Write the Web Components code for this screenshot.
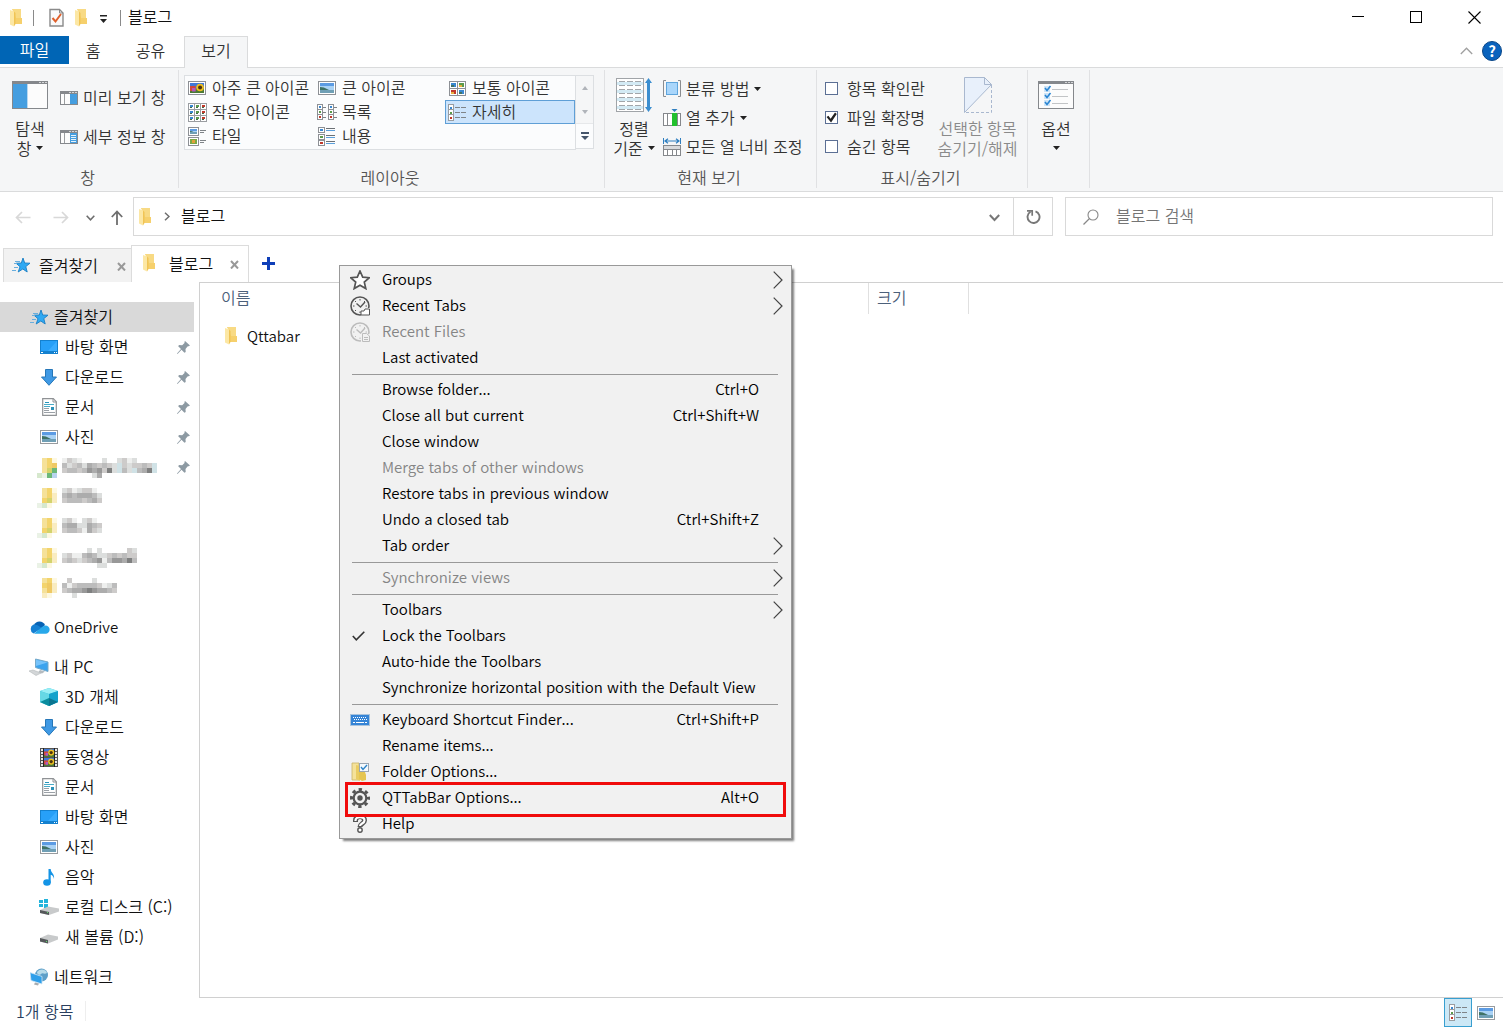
<!DOCTYPE html>
<html lang="ko">
<head>
<meta charset="utf-8">
<title>블로그</title>
<style>
  html, body { margin: 0; height: 100%; background: #fff; }
  body { font: 350 16px/20px "Noto Sans CJK KR", "Noto Sans", sans-serif; color: #111; }
</style>
</head>
<body>
<explorer-window></explorer-window>

<script>
/* ---------- icon library ---------- */
const svg = (w, h, body, extra = '') =>
  `<svg width="${w}" height="${h}" viewBox="0 0 ${w} ${h}" aria-hidden="true" fill="none" ${extra}>${body}</svg>`;
const rect = (x, y, w, h, fill, more = '') => `<rect x="${x}" y="${y}" width="${w}" height="${h}" fill="${fill}" ${more}/>`;
const frame = (x, y, w, h, fill = '#fff', stroke = '#8d9095') =>
  rect(x + .5, y + .5, w - 1, h - 1, fill, `stroke="${stroke}"`);
const photo = (x, y, w, h) =>
  rect(x, y, w, h, '#a9d2f5') + rect(x, y, w, Math.round(h * .3), '#5c9be3') +
  `<path d="M${x} ${y + h * .4}q${w * .3} 0 ${w * .5} ${h * .2}t${w * .5} ${h * .1}V${y + h}H${x}z" fill="#3f7266"/>` +
  rect(x, y + h - Math.ceil(h * .25), w, Math.ceil(h * .25), '#6f9fb5');
const flower = (x, y, w, h) =>
  rect(x, y, w, h, '#3f78d8') + rect(x, y + h * .55, w, h * .45, '#4b7a35') +
  rect(x, y + h * .3, w * .4, h * .5, '#d0483c') + rect(x + w * .15, y + h * .5, w * .25, h * .35, '#b05ac0') +
  `<circle cx="${x + w * .72}" cy="${y + h * .45}" r="${h * .38}" fill="#f0c020"/><circle cx="${x + w * .72}" cy="${y + h * .45}" r="${h * .2}" fill="#4b3310"/>`;
const mosaic = (rows, pal, size = 5, dx = 0) => {
  let out = '';
  rows.forEach((row, r) => [...row].forEach((c, i) => {
    if (pal[c]) out += rect(i * size - dx, r * size + 1, size, size, pal[c]);
  }));
  return svg(rows[0].length * size, rows.length * size, out, 'style="overflow:visible" shape-rendering="crispEdges"');
};
const gray = { a: '#eeefee', b: '#dcdedd', c: '#cdcbca', d: '#bcbcbc', e: '#acacac', f: '#989898', g: '#7f8080', t: '#d0e2e6' };
const gold = { y: '#f5e199', z: '#f3d46c', o: '#efc964', p: '#fdf8e2', g: '#d3d36c', h: '#d6e8cd', i: '#eaf2e6', q: '#6cb878', b: '#b9d3ee', r: '#f9ecc0' };
const blurName = rows => mosaic(rows, gray, 5, 3);
const blurFolder = rows => mosaic(rows, gold, 5, 2);
const windowFrame = (w, h) => frame(0, 0, w, h, '#fcfcfc', '#85888c') + rect(0, 0, w, 3, '#85888c') +
  rect(w - 9, 1, 2, 1, '#d5d6d8') + rect(w - 6, 1, 2, 1, '#d5d6d8') + rect(w - 3, 1, 2, 1, '#d5d6d8');
const clock = (c, bg) =>
  `<circle cx="10" cy="10" r="9" stroke="${c}" stroke-width="1.6"/>` +
  `<path d="M10 3v1.5M10 15.5V17M3 10h1.5M15.500 10H17M5 5l1 1M15 5l-1 1M5 15l1-1" stroke="${c}"/>` +
  `<path d="M6.500 7.500l4 3.500L15 6" stroke="${c}" stroke-width="1.4"/>` + rect(11, 12, 9, 8, bg);
const star = 'M10 1l2.700 6.100 6.600.6-5 4.400 1.500 6.500L10 15.200l-5.800 3.400 1.500-6.500-5-4.400 6.600-.6z';
const docLine = (x, y, w, c = '#9aa0a6') => rect(x, y, w, 1, c);
const miniSet = ['#3a88d0', '#5b9a4a', '#c0392b'];
const tick = (x, y) => rect(x, y, 6, 6, '#cfe5f7') + `<path d="M${x + 1} ${y + 2}l2 2.500 3.500-4.500" stroke="#2b86d3" stroke-width="1.6"/>`;

const ICONS = {
  folder: svg(12, 18, '<path d="M2 0h9v9h1v6H3V1z" fill="#f6d06c"/><path d="M2 0h9v9H6z" fill="#f8da84"/><path d="M0 1l4 1.500V17.500L0 15.500z" fill="#fce7a4"/><path d="M4 2.500V17.500l1.500-2.500V4z" fill="#f0c455"/>'),
  checkDoc: svg(15, 19, '<path d="M1 1.500h9.500l3.500 3.500v13H1z" fill="#fafafa" stroke="#8a8a8a" stroke-width="1.4"/><path d="M10.500 1.500V5H14" stroke="#8a8a8a"/><path d="M3.500 10l3 3.500 5.500-7.500" stroke="#e0602b" stroke-width="2"/>'),
  qatMenu: svg(7, 8, rect(0, 0, 7, 1.5, '#222') + '<path d="M0 4h7L3.500 8z" fill="#222"/>'),
  minimize: svg(12, 12, rect(0, 5, 12, 1, '#000')),
  maximize: svg(12, 12, frame(0, 0, 12, 12, 'none', '#000')),
  close: svg(13, 13, '<path d="M.5.5l12 12M12.500.5l-12 12" stroke="#000" stroke-width="1.1"/>'),
  chevUp: svg(13, 8, '<path d="M.8 7l5.700-5.800L12.200 7" stroke="#a0a0a0" stroke-width="1.3"/>'),
  caret: svg(7, 4, '<path d="M0 0h7L3.500 4z" fill="#222"/>'),
  navPane: svg(36, 28, windowFrame(36, 28) + rect(1, 3, 14, 24, '#459ee0') + rect(15, 3, 1, 24, '#b8d8f0')),
  previewPane: svg(18, 14, windowFrame(18, 14) + rect(4, 3, 1, 10, '#9a9da0') + rect(10, 3, 7, 10, '#459ee0')),
  detailPane: svg(18, 14, windowFrame(18, 14) + rect(4, 3, 1, 10, '#9a9da0') + rect(10, 3, 7, 10, '#459ee0') + [5, 7, 9, 11].map(y => rect(11, y, 5, 1, '#e6f3fc')).join('')),
  viewXL: svg(18, 14, frame(0, 0, 18, 14) + flower(2, 2, 14, 10)),
  viewL: svg(18, 14, frame(0, 0, 18, 14) + photo(2, 2, 14, 10)),
  viewM: svg(17, 15, [[0, 0, 0], [8, 0, 1], [0, 7, 2], [8, 7, 0]].map(([x, y, k]) => frame(x, y, 9, 8) + rect(x + 2, y + 2, 5, 4, miniSet[k]) + rect(x + 2, y + 4, 3, 2, k ? '#e8b040' : '#3f7266')).join('')),
  viewS: svg(19, 19, [0, 1, 2].map(r => [0, 1, 2].map(c => frame(c * 6, r * 6, 7, 7, '#fff', '#9a9da1') + rect(c * 6 + 2, r * 6 + 2, 3, 2, miniSet[c]) + rect(c * 6 + 2, r * 6 + 4, 2, 1, '#3f6a46')).join('')).join('')),
  viewList: svg(20, 16, [0, 11].map(x => [0, 5, 10].map((y, k) => frame(x, y, 6, 6) + rect(x + 2, y + 2, 2, 2, miniSet[k]) + rect(x + 6, y + 3, 3, 1, '#7f8488')).join('')).join('')),
  viewDetails: svg(18, 17, [0, 5, 10].map((y, k) => frame(0, y, 6, 7, '#fff', '#9a9da1') + rect(2, y + 3, 2, 2, miniSet[k]) + rect(7, y + 3, 5, 1, '#7f8488') + rect(13, y + 3, 5, 1, '#7f8488')).join('')),
  viewTiles: svg(19, 19, frame(0, 0, 11, 9) + photo(2, 2, 7, 5) + frame(0, 10, 11, 9) + rect(2, 12, 7, 5, '#7aa845') + rect(4, 13, 3, 3, '#e0a13a') + rect(12, 3, 6, 1, '#7f8488') + rect(12, 5, 4, 1, '#7f8488') + rect(12, 13, 6, 1, '#7f8488') + rect(12, 15, 4, 1, '#7f8488')),
  viewContent: svg(18, 19, [0, 7, 13].map((y, k) => frame(0, y, 7, 6) + rect(2, y + 2, 3, 2, miniSet[k]) + rect(8, y + 1, 9, 1, '#6b7075') + rect(8, y + 3, 9, 1, '#5ba0dc')).join('')),
  upSmall: svg(6, 4, '<path d="M0 4L3 0l3 4z" fill="#b0b4ba"/>'),
  downSmall: svg(6, 4, '<path d="M0 0h6L3 4z" fill="#b0b4ba"/>'),
  moreSmall: svg(8, 8, rect(0, 0, 8, 2, '#44546a') + '<path d="M0 4h8L4 8z" fill="#44546a"/>'),
  sort: svg(36, 36, frame(0, 1, 28, 34, '#fff', '#a0a4a8') + [5, 13, 21, 29].map(y => rect(1, y, 26, 3, '#d3eaf4')).join('') +
    [4, 8, 12, 16, 20, 24, 28, 32].map(y => [3, 11, 19].map(x => rect(x, y, 6, 1, '#a2a6aa')).join('')).join('') +
    '<path d="M32.500 1l3.500 5h-2v24h2l-3.500 5-3.500-5h2V6h-2z" fill="#3b8ed0"/>'),
  group: svg(18, 17, frame(3, 2, 12, 13, '#a9d6fb', '#5fa5dc') + '<path d="M3 .5H.5v16H3M15 .5h2.500v16H15" stroke="#8a8d91"/>'),
  addCol: svg(18, 17, frame(0, 4, 18, 13, '#fff', '#85888c') + rect(4, 4, 1, 13, '#85888c') + rect(9, 4, 5, 13, '#22c02e') + rect(14, 4, 1, 13, '#85888c') + '<path d="M8.500 0h6l-3 3z" fill="#2f7fc0"/>'),
  fitCols: svg(18, 18, rect(0, 0, 1, 6, '#2f7fc0') + rect(17, 0, 1, 6, '#2f7fc0') + '<path d="M2 3h14M5 .8L2 3l3 2.200M13 .8L16 3l-3 2.200" stroke="#2f7fc0" stroke-width="1.2"/>' + frame(0, 7, 18, 11, '#fff', '#85888c') + rect(1, 8, 16, 3, '#d8dadc') + rect(0, 11, 18, 1, '#85888c') + [4, 9, 13].map(x => rect(x, 11, 1, 7, '#85888c')).join('')),
  hideSel: svg(28, 36, '<path d="M.5 35.500V.5h20l7 7z" fill="#e8f0fb"/><path d="M.5 35.500V.5h20l7 7zM20.500.5v7h7" stroke="#a9b8cf"/><path d="M27.500 8v27.500H.5" stroke="#a9b8cf" stroke-dasharray="3 2"/>'),
  options: svg(36, 28, windowFrame(36, 28) + [5, 12, 19].map(y => tick(6, y) + rect(14, y + 3, 16, 1, '#c2c4c6')).join('')),
  back: svg(16, 13, '<path d="M15.500 6.500H1.500M7 1L1.500 6.500 7 12" stroke="#d8d8d8" stroke-width="1.7"/>'),
  forward: svg(16, 13, '<path d="M.5 6.500h14M9 1l5.500 5.500L9 12" stroke="#d8d8d8" stroke-width="1.7"/>'),
  recent: svg(9, 6, '<path d="M.7.8l3.800 4 3.800-4" stroke="#6e6e6e" stroke-width="1.6"/>'),
  up: svg(12, 15, '<path d="M6 15V1.500M.8 7L6 1.500 11.200 7" stroke="#6e6e6e" stroke-width="1.8"/>'),
  crumb: svg(6, 9, '<path d="M1 .7l4 3.800-4 3.800" stroke="#6e6e6e" stroke-width="1.5"/>'),
  dropdown: svg(11, 8, '<path d="M.8 1l4.700 5 4.700-5" stroke="#777" stroke-width="2"/>'),
  refresh: svg(15, 16, '<path d="M9.500 2.300a6 6 0 1 1-5 .5" stroke="#777" stroke-width="1.9"/><path d="M1 1.800h5.200v5" stroke="#777" stroke-width="1.7"/>'),
  search: svg(16, 16, '<circle cx="10" cy="6" r="5" stroke="#888" stroke-width="1.1"/><path d="M6.500 9.500L.5 15.500" stroke="#888" stroke-width="1.2"/>'),
  tabClose: svg(9, 9, '<path d="M1 1l7 7.500M8 1L1 8.500" stroke="#999" stroke-width="2"/>'),
  plus: svg(13, 13, rect(5, 0, 3, 13, '#0f3fb8') + rect(0, 5, 13, 3, '#0f3fb8')),
  quick: svg(18, 17, '<path d="M11 1l1.700 5 5.300.2-4.200 3.400 1.400 5.400-4.400-3-4.600 3 1.800-5.300L4 6.200l5.300-.2z" fill="#2fa9f3" stroke="#1b7fc4" stroke-width=".9"/><path d="M3 4.500h5M2 6.500h3M2 10.500h4M0 13.500h4" stroke="#68aede"/>'),
  desktop: svg(18, 14, rect(0, 0, 18, 14, '#1481cf') + rect(1, 1, 16, 10, '#27a0f8') + '<path d="M17 1v10H8z" fill="#3badff"/>' + rect(1, 12, 2, 1, '#fff') + rect(14, 12, 1, 1, '#fff') + rect(16, 12, 1, 1, '#fff')),
  download: svg(16, 17, '<path d="M4.500.5h7V8h4L8 16.300.5 8h4z" fill="#3f99e4" stroke="#2677b8"/>'),
  document: svg(15, 18, '<path d="M.7.7h10.600l3 3v13.600H.7z" fill="#fff" stroke="#8f9295" stroke-width="1.2"/><path d="M11 .7V4h3.300" stroke="#8f9295"/>' + rect(3, 4, 4, 1, '#2594ba') + rect(2, 6, 10, 1, '#49abc8') + rect(2, 8, 6, 1, '#49abc8') + rect(9, 9, 3, 3, '#2d92b8') + docLine(2, 10, 5) + docLine(2, 12, 5) + docLine(2, 14, 11)),
  picture: svg(18, 14, frame(0, 0, 18, 14, '#fff', '#989b9e') + photo(2, 2, 14, 10)),
  onedrive: svg(21, 14, '<path d="M5 5A6 6 0 0 1 16 5l-5 5H4z" fill="#0763b5"/><path d="M4.500 4.500A5 5 0 0 0 4.500 13.500L13 8 8 5z" fill="#1580d3"/><path d="M13 7a5 5 0 0 1 3.500-1.500 4 4 0 0 1 0 8.300H5z" fill="#28a8ea"/>'),
  pc: svg(20, 18, '<path d="M6.500 1l12.500 3v9.500L6.500 9.500z" fill="#3ba3ee" stroke="#76a9c9"/><path d="M7 1.700l11.500 2.800L7 8z" fill="#77c3fa"/><path d="M11 12l5 1.500-3 2-4-1z" fill="#b4bbc0"/><path d="M0 13l4-1 8 3-5 2.500z" fill="#d3d6d8" stroke="#b4b8bb" stroke-width=".6"/>'),
  cube: svg(18, 18, '<path d="M9 0l9 3v11l-9 4-9-4V3z" fill="#35c3dd"/><path d="M9 0l9 3-9 3-9-3z" fill="#98eef5"/><path d="M0 3l9 3v12l-9-4z" fill="#66d8e5"/><path d="M9 6l9-3v11l-9 4z" fill="#12a2cb"/><path d="M0 14l9-4v8z" fill="#0b8c9e"/><path d="M9 10l9 4-9 4z" fill="#0a7590"/>'),
  video: svg(18, 19, rect(0, 0, 18, 19, '#555') + [0, 1, 2, 3, 4, 5].map(k => rect(1, 1 + k * 3, 2, 2, '#e5e5e5') + rect(15, 1 + k * 3, 2, 2, '#e5e5e5')).join('') + rect(3, 0, 1, 19, '#222') + rect(14, 0, 1, 19, '#222') + flower(4, 1, 10, 8) + flower(4, 10, 10, 8)),
  music: svg(12, 17, '<ellipse cx="4" cy="13.500" rx="3.800" ry="3.200" fill="#1494e6"/><path d="M5.500 0h2.200c0 4 4.300 4.500 3.300 10-.6-2.500-1.300-3.600-3.300-4.200v8H5.500z" fill="#1494e6"/>'),
  diskC: svg(20, 16, rect(0, 1, 4, 3, '#22b4dc') + rect(5, 0, 4, 4, '#22b4dc') + rect(0, 5, 4, 3, '#22b4dc') + rect(5, 5, 4, 4, '#22b4dc') + '<path d="M1 11l8-3.500 11 2v3L10 16l-9-2z" fill="#c8cacb"/><path d="M1 11l9 2v3l-9-2z" fill="#55585a"/>' + rect(8, 13, 1, 1, '#5de06b'), 'style="overflow:visible"'),
  diskD: svg(18, 14, '<path d="M0 8l8-3.500 10 2v3L8 13.500l-8-2z" fill="#c8cacb"/><path d="M0 8l8 2v3.500l-8-2z" fill="#55585a"/>' + rect(6, 11, 1, 1, '#5de06b')),
  network: svg(18, 18, '<circle cx="11.500" cy="7" r="6.500" fill="#5d9fc8"/><path d="M7 4c3-4 9-3 10 1-3 2-4-1-6 1s-4 0-4-2z" fill="#b7dbe9"/><path d="M0 4.500l12 4v7.500L1 12.500z" fill="#2e9fea" stroke="#cfe6f5" stroke-width=".8"/><path d="M5 14.500l4 1-1 2-4-1z" fill="#a8acb0"/>'),
  pin: svg(13, 13, '<path d="M8 0l5 4.500-1.500.7-1 .2-2 2.600.2 3-1.200.7-3-3L.5 13 0 12.500l4-4.500-2.800-2.800L2 4l3.200.2L7.500 2V.8z" fill="#8d9aa3"/>'),
  cloudDrive: blurFolder(['.yzp', '.yzo', '.ygq', 'hiqb']),
  mFolderA: blurFolder(['.yzp', '.yzr', '.zgr', 'ihp.']),
  mFolderB: blurFolder(['.yzp', '.zor', '.yor', '.rp.']),
  blur1: blurName(['acba....b..bcab....', 'dbcdbedcdcbtcbccdct', 'cddcdfefcgbtdbtdegt', '......be...........']),
  blur2: blurName(['bcabcca.', 'dedeeedb', 'cdddcdec', '........']),
  blur3: blurName(['bca.bca.', 'deebbedc', 'cddcaecb', '........']),
  blur4: blurName(['.....b.b.....cb', 'bcaadedbbcdcdcc', 'cdcbcdefadffegd', '.......bb......']),
  blur5: blurName(['.c....b....', 'dacddddcabd', 'cdeefgfeedc', '..b........']),
  groupStar: svg(20, 20, `<path d="${star}" fill="#fff" stroke="#555" stroke-width="1.7"/>`),
  clockTab: svg(20, 20, clock('#555', '#f1f1f1') + '<path d="M11 19v-4h3l1-2h4.500v6z" fill="#fff" stroke="#555"/>'),
  clockFile: svg(20, 20, clock('#bcbcbc', '#f1f1f1') + '<path d="M12.500 11.500h4l3 2.500v5.500h-7z" stroke="#bcbcbc"/><path d="M14 15.500h4M14 17.500h4" stroke="#bcbcbc"/>'),
  check: svg(16, 10, '<path d="M.8 5l3.500 3.800L12.300.8" stroke="#333" stroke-width="1.6"/>'),
  keyboard: svg(20, 12, rect(0, 0, 20, 12, '#a9c3dc') + rect(1, 1, 18, 10, '#3584d6') + [3, 5, 7, 9, 11, 13, 15].map(x => rect(x, 3, 1, 1, '#fff') + rect(x + 1, 5, 1, 1, '#fff')).join('') + rect(3, 8, 2, 1, '#fff') + rect(6, 8, 8, 1, '#fff') + rect(15, 8, 2, 1, '#fff')),
  folderOpt: svg(18, 20, '<path d="M1 1h7v17H1z" fill="#f5e29a" stroke="#c9b468" stroke-width=".8"/><path d="M5 3l4 1v15l-4-2z" fill="#e9cc62"/>' + frame(8, 1, 10, 9, '#f4f9fd', '#9aa6b2') + '<path d="M10 5l2 2.500L16 3" stroke="#2d84c8" stroke-width="1.4"/><path d="M8 10h6l1 3v5l-4 1-3-2z" fill="#e5c550"/>'),
  gear: svg(20, 20, '<circle cx="10" cy="10" r="8.500" stroke="#555" stroke-width="3" stroke-dasharray="3.340 3.340" stroke-dashoffset="1.670"/><circle cx="10" cy="10" r="6.300" stroke="#555" stroke-width="2.200"/><circle cx="10" cy="10" r="2.700" fill="#555"/>'),
  help: svg(14, 18, '<path d="M2.500 7V5.500C2.500 0 11.500 0 11.500 5.500c0 3-4.500 3-4.500 6.500" stroke="#555" stroke-width="5"/><path d="M2.500 6v-.5C2.500 1 11.500 1 11.500 5.500c0 3-4.500 3-4.500 5.500" stroke="#fff" stroke-width="2.200"/><circle cx="7" cy="15" r="2.200" fill="#fff" stroke="#555" stroke-width="1.4"/>'),
  arrow: svg(10, 18, '<path d="M.7.7L9 9 .7 17.300" stroke="#444" stroke-width="1.2"/>'),
};

/* ---------- base class ---------- */
const BASE = `*{box-sizing:border-box}
  button,input{font:inherit;color:inherit;background:none;border:0;margin:0;padding:0;border-radius:0}
  a{color:inherit;text-decoration:none}
  [hidden]{display:none}`;
class Base extends HTMLElement {
  constructor() {
    super();
    this.attachShadow({ mode: 'open' });
  }
  connectedCallback() {
    this.shadowRoot.innerHTML = `<style>${BASE}${this.css()}</style>${this.html()}`;
  }
  attr(n, d = '') { return this.getAttribute(n) ?? d; }
}
const ic = n => `<x-icon name="${n}"></x-icon>`;

customElements.define('x-icon', class extends Base {
  css() { return ':host{display:inline-flex;flex:none;align-items:center;justify-content:center}svg{display:block;flex:none}'; }
  html() { return ICONS[this.attr('name')] || ''; }
});

/* ---------- title bar ---------- */
customElements.define('title-bar', class extends Base {
  css() { return `
    :host{display:flex;height:36px;justify-content:space-between}
    .left{display:flex;align-items:center;padding:0 0 1px 10px}
    i{width:1px;height:16px;background:#8a8a8a}
    button{display:flex;align-items:center;justify-content:center;height:34px}
    .win{display:flex}.win button{width:58px}
    .q1{margin-left:11px}.q2{width:15px;margin:0 11px 0 15px}.q3{width:12px;margin-right:13px}.q4{width:7px;margin-right:13px;padding-top:3px}
    .t{margin-left:7px;padding-bottom:3px}`; }
  html() { return `<div class="left">${ic('folder')}<i class="q1"></i>
      <button class="q2" aria-label="속성">${ic('checkDoc')}</button>
      <button class="q3" aria-label="새 폴더">${ic('folder')}</button>
      <button class="q4" aria-label="사용자 지정">${ic('qatMenu')}</button><i></i>
      <span class="t"><slot></slot></span></div>
    <div class="win"><button aria-label="최소화">${ic('minimize')}</button><button aria-label="최대화">${ic('maximize')}</button><button aria-label="닫기">${ic('close')}</button></div>`; }
});

/* ---------- ribbon ---------- */
customElements.define('ribbon-tabs', class extends Base {
  css() { return `
    :host{display:flex;height:31px;justify-content:space-between;color:#333}
    .tabs{display:flex;align-items:flex-start}
    button{height:28px;padding-bottom:2px}
    .file{width:69px;background:#0065b5;color:#fff}
    .home{width:48px}.share{width:67px}
    .home,.share{height:30px;padding-bottom:3px}
    .on{width:64px;height:32px;padding-bottom:5px;border:1px solid #dadbdc;border-bottom:0;background:#f5f6f7;position:relative}
    .end{display:flex;align-items:center;gap:9px;padding:0 1px 1px 0}
    .end button{display:flex;align-items:center;justify-content:center;padding:0}
    .help{width:20px;height:20px;border-radius:50%;background:#0a63bd;border:1px solid #0a4788;color:#fff;font-weight:700;font-size:15px}`; }
  html() { return `<div class="tabs" role="tablist"><button class="file">파일</button><button class="home" role="tab">홈</button><button class="share" role="tab">공유</button><button class="on" role="tab" aria-selected="true">보기</button></div>
    <div class="end"><button aria-label="리본 최소화">${ic('chevUp')}</button><button class="help">?</button></div>`; }
});
customElements.define('ribbon-group', class extends Base {
  css() { return `
    :host{display:flex;flex-direction:column;flex:none;height:118px;border-right:1px solid #e0e1e3}
    .c{display:flex;flex:1;align-items:flex-start}
    .l{height:21px;padding-right:3px;text-align:center;color:#555}`; }
  html() { return `<div class="c"><slot></slot></div><div class="l">${this.attr('label')}</div>`; }
});
customElements.define('big-button', class extends Base {
  css() { return `
    :host{display:block;flex:none}
    button{display:flex;width:100%;flex-direction:column;align-items:center;padding-top:2px}
    x-icon{height:46px}
    span{white-space:nowrap;display:flex;align-items:center;justify-content:center;gap:5px;height:20px}
    span x-icon{height:20px}
    button:disabled{color:#8a8a8a}`; }
  html() {
    const caret = this.hasAttribute('menu') ? ic('caret') : '';
    return `<button ${this.hasAttribute('disabled') ? 'disabled' : ''}>${ic(this.attr('icon'))}<span><slot></slot></span><span>${this.attr('second')}${caret}</span></button>`;
  }
});
customElements.define('small-button', class extends Base {
  css() { return `
    :host{display:block}
    button{display:flex;align-items:center;gap:5px;height:100%;white-space:nowrap}
    span{padding-bottom:1px}
    x-icon{width:18px}x-icon.m{width:auto}`; }
  html() { return `<button>${ic(this.attr('icon'))}<span><slot></slot></span>${this.hasAttribute('menu') ? '<x-icon class="m" name="caret"></x-icon>' : ''}</button>`; }
});
customElements.define('gallery-item', class extends Base {
  css() { return `
    :host{display:block}
    button{display:flex;align-items:center;gap:6px;width:100%;height:24px;border:1px solid transparent;padding:0 0 0 2px;white-space:nowrap}
    :host([selected]) button{background:#cce4fc;border-color:#5f9fd6}
    span{padding-bottom:2px}
    x-icon{width:18px;height:20px}`; }
  html() { return `<button>${ic(this.attr('icon'))}<span><slot></slot></span></button>`; }
});
customElements.define('view-gallery', class extends Base {
  css() { return `
    :host{display:flex;margin:5px 10px 0 5px}
    .g{display:grid;grid-template-columns:repeat(3,130px);grid-auto-rows:24px;height:75px;background:#fbfcfd;border:1px solid #dcdfe2}
    .s{display:flex;flex-direction:column;width:18px;height:74px;border:1px solid #dcdfe2;border-left:0}
    .s button{display:flex;flex:1;align-items:center;justify-content:center}
    .s button:last-child{background:#fbfcfd;border-top:1px solid #e6e8ea}`; }
  html() { return `<div class="g"><slot></slot></div><div class="s"><button aria-label="위로">${ic('upSmall')}</button><button aria-label="아래로">${ic('downSmall')}</button><button aria-label="자세히">${ic('moreSmall')}</button></div>`; }
});
customElements.define('check-option', class extends Base {
  css() { return `
    :host{display:block}
    label{display:flex;align-items:center;gap:9px;height:100%;white-space:nowrap}
    span{padding-bottom:1px}
    input{appearance:none;width:13px;height:13px;border:1px solid #5b6f94;background:#fff;display:grid;place-items:center}
    input:checked::before{content:"";width:11px;height:11px;background:#222;clip-path:polygon(5% 45%,22% 35%,42% 62%,82% 5%,98% 18%,46% 95%)}`; }
  html() { return `<label><input type="checkbox" ${this.hasAttribute('checked') ? 'checked' : ''}><span><slot></slot></span></label>`; }
});
customElements.define('ribbon-bar', class extends Base {
  css() { return `
    :host{display:flex;height:125px;padding-top:2px;background:#f5f6f7;border-top:1px solid #dadbdc;border-bottom:1px solid #dadbdc;color:#333}
    .two,.three{display:flex;flex-direction:column}
    .two{width:118px;padding-top:8px}.two>*{height:39px}
    .three{padding-top:4px}.three>*{height:29px}
    .view{width:153px}
    .show{width:103px;margin-left:8px}
    .w60{width:60px}.w58{width:58px}.w56{width:56px;margin-right:5px}.w99{width:99px}`; }
  html() { return `
    <ribbon-group label="창">
      <big-button class="w60" icon="navPane" second="창" menu>탐색</big-button>
      <div class="two"><small-button icon="previewPane">미리 보기 창</small-button><small-button icon="detailPane">세부 정보 창</small-button></div>
    </ribbon-group>
    <ribbon-group label="레이아웃"><view-gallery>
      <gallery-item icon="viewXL">아주 큰 아이콘</gallery-item><gallery-item icon="viewL">큰 아이콘</gallery-item><gallery-item icon="viewM">보통 아이콘</gallery-item>
      <gallery-item icon="viewS">작은 아이콘</gallery-item><gallery-item icon="viewList">목록</gallery-item><gallery-item icon="viewDetails" selected>자세히</gallery-item>
      <gallery-item icon="viewTiles">타일</gallery-item><gallery-item icon="viewContent">내용</gallery-item>
    </view-gallery></ribbon-group>
    <ribbon-group label="현재 보기">
      <big-button class="w58" icon="sort" second="기준" menu>정렬</big-button>
      <div class="three view"><small-button icon="group" menu>분류 방법</small-button><small-button icon="addCol" menu>열 추가</small-button><small-button icon="fitCols">모든 열 너비 조정</small-button></div>
    </ribbon-group>
    <ribbon-group label="표시/숨기기">
      <div class="three show"><check-option>항목 확인란</check-option><check-option checked>파일 확장명</check-option><check-option>숨긴 항목</check-option></div>
      <big-button class="w99" icon="hideSel" second="숨기기/해제" disabled>선택한 항목</big-button>
    </ribbon-group>
    <ribbon-group><big-button class="w56" icon="options" menu>옵션</big-button></ribbon-group>`; }
});

/* ---------- address row ---------- */
customElements.define('address-row', class extends Base {
  css() { return `
    :host{display:flex;height:53px;padding:5px 10px 9px 0}
    button{display:flex;align-items:center;justify-content:center}
    .nav{display:flex;flex:none;width:133px;padding:2px 10px 0 15px;justify-content:space-between;align-items:center}
    .nav button:first-child{margin-right:6px}
    .box{display:flex;border:1px solid #d9d9d9}
    .addr{flex:920 1 920px}
    .path{flex:1;display:flex;align-items:center;padding-left:5px;gap:13px}
    .path a{margin-left:-2px;padding-bottom:3px}
    .dd{width:37px;padding-top:2px}
    .rf{width:39px;border-left:1px solid #d9d9d9}
    .find{flex:428 1 428px;margin-left:12px;align-items:center;padding-left:17px;gap:17px}
    input{flex:1;min-width:0;height:100%;outline:0;padding-bottom:3px}
    input::placeholder{color:#757575;opacity:1}`; }
  html() { return `
    <div class="nav"><button aria-label="뒤로">${ic('back')}</button><button aria-label="앞으로">${ic('forward')}</button><button aria-label="최근 위치">${ic('recent')}</button><button aria-label="위로">${ic('up')}</button></div>
    <div class="box addr"><div class="path">${ic('folder')}${ic('crumb')}<a href="#">블로그</a></div><button class="dd" aria-label="이전 위치">${ic('dropdown')}</button><button class="rf" aria-label="새로 고침">${ic('refresh')}</button></div>
    <div class="box find">${ic('search')}<input type="search" aria-label="블로그 검색" placeholder="블로그 검색"></div>`; }
});

/* ---------- folder tabs ---------- */
customElements.define('folder-tab', class extends Base {
  css() { return `
    :host{display:flex;align-items:center;height:34px;width:129px;padding:0 5px 0 8px;background:#f2f2f2;border:1px solid #dcdcdc;border-bottom:0}
    :host([active]){height:37px;width:118px;padding:0 9px 2px 11px;background:#fff;margin-left:-1px}
    .n{display:flex;flex:1;align-items:center;gap:9px}
    :host([active]) .n{gap:14px}
    span{padding-bottom:1px}
    .x{display:flex;padding-top:2px}`; }
  html() { return `<button class="n" role="tab">${ic(this.attr('icon'))}<span><slot></slot></span></button><button class="x" aria-label="탭 닫기">${ic('tabClose')}</button>`; }
});
customElements.define('folder-tabs', class extends Base {
  css() { return `:host{display:flex;height:37px;align-items:flex-end;padding-left:3px}
    .add{display:flex;align-self:center;margin-left:13px}`; }
  html() { return `<folder-tab icon="quick">즐겨찾기</folder-tab><folder-tab icon="folder" active>블로그</folder-tab><button class="add" aria-label="새 탭">${ic('plus')}</button>`; }
});

/* ---------- navigation pane ---------- */
customElements.define('nav-item', class extends Base {
  css() { return `
    :host{display:block}
    a{display:flex;align-items:center;height:30px;padding:0 4px 0 40px;gap:7px;white-space:nowrap}
    :host([root]) a{padding-left:30px;gap:6px}
    :host([selected]) a{background:#d9d9d9}
    :host([latin]) .l{font-size:15px;padding:0}
    .i{width:18px}.l{flex:1;display:flex;padding-bottom:2px}
    .l.b{padding:0}`; }
  html() {
    const blur = this.attr('blur');
    return `<a href="#" ${blur ? 'aria-label="폴더"' : ''}><x-icon class="i" name="${this.attr('icon')}"></x-icon><span class="l${blur ? ' b' : ''}">${blur ? ic(blur) : '<slot></slot>'}</span>${this.hasAttribute('pin') ? ic('pin') : ''}</a>`;
  }
});
customElements.define('nav-pane', class extends Base {
  css() { return `:host{display:flex;flex-direction:column;gap:10px;flex:none;width:199px;padding:20px 5px 0 0}`; }
  html() { return `
    <div><nav-item root selected icon="quick">즐겨찾기</nav-item>
    <nav-item icon="desktop" pin>바탕 화면</nav-item><nav-item icon="download" pin>다운로드</nav-item><nav-item icon="document" pin>문서</nav-item><nav-item icon="picture" pin>사진</nav-item>
    <nav-item icon="cloudDrive" blur="blur1" pin></nav-item><nav-item icon="mFolderA" blur="blur2"></nav-item><nav-item icon="mFolderA" blur="blur3"></nav-item><nav-item icon="mFolderA" blur="blur4"></nav-item><nav-item icon="mFolderB" blur="blur5"></nav-item></div>
    <div><nav-item root latin icon="onedrive">OneDrive</nav-item></div>
    <div><nav-item root icon="pc">내 PC</nav-item>
    <nav-item icon="cube">3D 개체</nav-item><nav-item icon="download">다운로드</nav-item><nav-item icon="video">동영상</nav-item><nav-item icon="document">문서</nav-item><nav-item icon="desktop">바탕 화면</nav-item><nav-item icon="picture">사진</nav-item><nav-item icon="music">음악</nav-item><nav-item icon="diskC">로컬 디스크 (C:)</nav-item><nav-item icon="diskD">새 볼륨 (D:)</nav-item></div>
    <div><nav-item root icon="network">네트워크</nav-item></div>`; }
});

/* ---------- file list ---------- */
customElements.define('file-list', class extends Base {
  css() { return `
    :host{display:block;flex:1;min-width:0;border:1px solid #d0d0d0;border-right:0}
    table{border-collapse:separate;border-spacing:0;table-layout:fixed;width:769px}
    th{height:31px;text-align:left;font-weight:inherit;color:#4c607a;padding:0 8px 3px;border-right:1px solid #e0e0e0}
    th:first-child{width:669px;padding-left:21px}
    td{padding:8px 0 0 25px}
    a{display:flex;align-items:center;gap:10px;height:28px;font-size:15px}`; }
  html() { return `<table><thead><tr><th>이름</th><th>크기</th></tr></thead><tbody><tr><td><a href="#">${ic('folder')}Qttabar</a></td><td></td></tr></tbody></table>`; }
});

/* ---------- context menu ---------- */
customElements.define('menu-item', class extends Base {
  css() { return `
    :host{display:block;position:relative}
    button{display:flex;align-items:center;width:100%;height:26px;padding:0 8px 0 9px;text-align:left;white-space:nowrap}
    button:disabled{color:#858585}
    .i{width:22px;height:26px;margin-right:11px}
    .t{flex:1}.t,.k{padding-bottom:2px}.k{margin-right:24px}
    :host([marked])::after{content:"";position:absolute;inset:-3px 5px -6px 5px;border:3px solid #f00b0b;z-index:1;pointer-events:none}`; }
  html() {
    const key = this.attr('key');
    return `<button role="menuitem" ${this.hasAttribute('disabled') ? 'disabled' : ''}><x-icon class="i" name="${this.attr('icon')}"></x-icon><span class="t"><slot></slot></span>${key ? `<span class="k">${key}</span>` : ''}${this.hasAttribute('sub') ? ic('arrow') : ''}</button>`;
  }
});
customElements.define('menu-line', class extends Base {
  css() { return ':host{display:block;height:6px;padding:3px 13px 0 12px}i{display:block;height:1px;background:#999}'; }
  html() { return '<i></i>'; }
});
customElements.define('context-menu', class extends Base {
  css() { return `
    :host{display:block;position:absolute;left:339px;top:265px;width:453px;padding:1px 0;background:#f1f1f1;border:1px solid #999;box-shadow:3px 3px 2px -1px rgba(0,0,0,.5);font-size:15px;color:#000}`; }
  html() { return `<slot></slot>`; }
});

/* ---------- status bar ---------- */
customElements.define('status-bar', class extends Base {
  css() { return `
    :host{display:flex;height:30px;justify-content:space-between;color:#2a3f5f}
    .n{margin:3px 0 7px;padding:0 12px 0 16px;border-right:1px solid #eee}
    .v{display:flex;padding-right:3px}
    button{width:28px;height:29px;display:flex;align-items:center;justify-content:center;border:1px solid transparent}
    .on{background:#cce8f6;border-color:#389fd0}`; }
  html() { return `<span class="n">1개 항목</span><div class="v"><button class="on" aria-label="자세히 보기">${ic('viewDetails')}</button><button aria-label="큰 아이콘 보기">${ic('picture')}</button></div>`; }
});

/* ---------- window ---------- */
customElements.define('explorer-window', class extends Base {
  css() { return `
    :host{display:flex;flex-direction:column;min-height:100vh;position:relative}
    main{display:flex;flex:1}`; }
  html() { return `
    <title-bar>블로그</title-bar><ribbon-tabs></ribbon-tabs><ribbon-bar></ribbon-bar><address-row></address-row><folder-tabs></folder-tabs>
    <main><nav-pane></nav-pane><file-list></file-list></main><status-bar></status-bar>
    <context-menu role="menu">
      <menu-item icon="groupStar" sub>Groups</menu-item><menu-item icon="clockTab" sub>Recent Tabs</menu-item><menu-item icon="clockFile" disabled>Recent Files</menu-item><menu-item>Last activated</menu-item>
      <menu-line></menu-line>
      <menu-item key="Ctrl+O">Browse folder...</menu-item><menu-item key="Ctrl+Shift+W">Close all but current</menu-item><menu-item>Close window</menu-item><menu-item disabled>Merge tabs of other windows</menu-item><menu-item>Restore tabs in previous window</menu-item><menu-item key="Ctrl+Shift+Z">Undo a closed tab</menu-item><menu-item sub>Tab order</menu-item>
      <menu-line></menu-line>
      <menu-item disabled sub>Synchronize views</menu-item>
      <menu-line></menu-line>
      <menu-item sub>Toolbars</menu-item><menu-item icon="check">Lock the Toolbars</menu-item><menu-item>Auto-hide the Toolbars</menu-item><menu-item>Synchronize horizontal position with the Default View</menu-item>
      <menu-line></menu-line>
      <menu-item icon="keyboard" key="Ctrl+Shift+P">Keyboard Shortcut Finder...</menu-item><menu-item>Rename items...</menu-item><menu-item icon="folderOpt">Folder Options...</menu-item><menu-item icon="gear" key="Alt+O" marked>QTTabBar Options...</menu-item><menu-item icon="help">Help</menu-item>
    </context-menu>`; }
});
</script>
</body>
</html>
